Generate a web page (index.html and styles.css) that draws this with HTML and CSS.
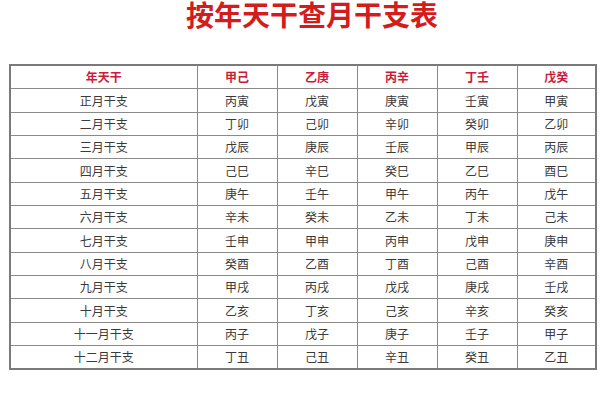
FILE: index.html
```html
<!DOCTYPE html>
<html lang="zh">
<head>
<meta charset="utf-8">
<title>按年天干查月干支表</title>
<link rel="stylesheet" href="styles.css">
</head>
<body>
<h1 class="title">按年天干查月干支表</h1>
<table class="grid">
  <colgroup>
    <col class="c-first"><col class="c-data"><col class="c-data"><col class="c-data"><col class="c-data"><col class="c-last">
  </colgroup>
  <thead>
    <tr><th>年天干</th><th>甲己</th><th>乙庚</th><th>丙辛</th><th>丁壬</th><th>戊癸</th></tr>
  </thead>
  <tbody>
    <tr><td>正月干支</td><td>丙寅</td><td>戊寅</td><td>庚寅</td><td>壬寅</td><td>甲寅</td></tr>
    <tr><td>二月干支</td><td>丁卯</td><td>己卯</td><td>辛卯</td><td>癸卯</td><td>乙卯</td></tr>
    <tr><td>三月干支</td><td>戊辰</td><td>庚辰</td><td>壬辰</td><td>甲辰</td><td>丙辰</td></tr>
    <tr><td>四月干支</td><td>己巳</td><td>辛巳</td><td>癸巳</td><td>乙巳</td><td>酉巳</td></tr>
    <tr><td>五月干支</td><td>庚午</td><td>壬午</td><td>甲午</td><td>丙午</td><td>戊午</td></tr>
    <tr><td>六月干支</td><td>辛未</td><td>癸未</td><td>乙未</td><td>丁未</td><td>己未</td></tr>
    <tr><td>七月干支</td><td>壬申</td><td>甲申</td><td>丙申</td><td>戊申</td><td>庚申</td></tr>
    <tr><td>八月干支</td><td>癸酉</td><td>乙酉</td><td>丁酉</td><td>己酉</td><td>辛酉</td></tr>
    <tr><td>九月干支</td><td>甲戌</td><td>丙戌</td><td>戊戌</td><td>庚戌</td><td>壬戌</td></tr>
    <tr><td>十月干支</td><td>乙亥</td><td>丁亥</td><td>己亥</td><td>辛亥</td><td>癸亥</td></tr>
    <tr><td>十一月干支</td><td>丙子</td><td>戊子</td><td>庚子</td><td>壬子</td><td>甲子</td></tr>
    <tr><td>十二月干支</td><td>丁丑</td><td>己丑</td><td>辛丑</td><td>癸丑</td><td>乙丑</td></tr>
  </tbody>
</table>
</body>
</html>
```
FILE: styles.css
```css
html, body {
  margin: 0;
  padding: 0;
  background: #ffffff;
}
body {
  font-family: "Noto Sans CJK SC", "Noto Sans", sans-serif;
  width: 600px;
  height: 400px;
  overflow: hidden;
}
.title {
  margin: 0;
  padding-left: 24px;
  text-align: center;
  font-size: 28px;
  line-height: 28px;
  height: 28px;
  font-weight: bold;
  color: #d41c1c;
}
.grid {
  margin: 36px 0 0 9px;
  width: 586px;
  table-layout: fixed;
  border-collapse: collapse;
  border: 2px solid #7a7a7a;
}
.c-first { width: 187px; }
.c-data { width: 80px; }
.c-last { width: 79px; }
.grid th,
.grid td {
  border: 1px solid #8a8a8a;
  height: 22.35px;
  padding: 0;
  text-align: center;
  font-size: 12px;
  line-height: 14px;
}
.grid th {
  color: #cc1a3a;
  font-weight: bold;
}
.grid td {
  color: #3a3a3a;
  font-weight: normal;
}
```
